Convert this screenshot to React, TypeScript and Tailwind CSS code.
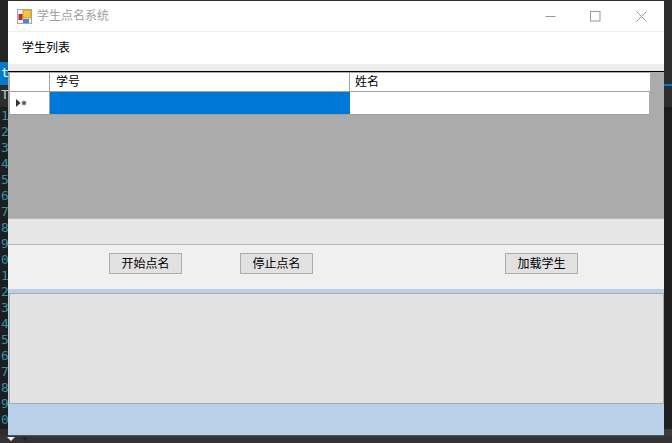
import React from "react";

const cjk = "font-['Liberation_Sans','Noto_Sans_CJK_SC',sans-serif]";
const lineNumbers = ["1", "2", "3", "4", "5", "6", "7", "8", "9", "0", "1", "2", "3", "4", "5", "6", "7", "8", "9", "0"];

function WinButton({ label, className }: { label: string; className: string }) {
  return (
    <button className={`block h-[21px] w-[73px] border border-[#adadad] bg-[#e1e1e1] text-[12px] leading-[21px] text-black ${className}`}>
      {label}
    </button>
  );
}

function LeftGutter() {
  return (
    <div className="flex h-full w-[8px] shrink-0 flex-col overflow-hidden bg-[#1e1e1e]">
      <div className="h-[62px] shrink-0 bg-[#252526]" />
      <div className="h-[23px] shrink-0 bg-[#007acc] pl-[1px] font-['DejaVu_Sans_Mono',monospace] text-[13px] leading-[22px] text-white">
        t
      </div>
      <div className="h-[22px] shrink-0 bg-[#2d2d30] pl-[1px] font-['DejaVu_Sans_Mono',monospace] text-[13px] leading-[20px] text-[#a8d8c8]">
        T
      </div>
      <div className="h-[322px] shrink-0 overflow-hidden pl-[1px] pt-[1px] font-['DejaVu_Sans_Mono',monospace] text-[13px] leading-[16px] text-[#2b91af]">
        {lineNumbers.map((n, i) => (
          <div key={i} className="h-[16px]">
            {n}
          </div>
        ))}
      </div>
      <div className="flex-1 bg-[#2d2d30]" />
    </div>
  );
}

function RightGutter() {
  return (
    <div className="flex w-[8px] shrink-0 flex-col bg-[#1e1e1e]">
      <div className="h-[84px] shrink-0 bg-[#2d2d30]" />
      <div className="h-[2px] shrink-0 bg-[#007acc]" />
      <div className="h-[21px] shrink-0 bg-[#2d2d30]" />
      <div className="h-[322px] shrink-0 bg-[#1e1e1e]" />
      <div className="flex-1 bg-[#3a3a3d]" />
    </div>
  );
}

export default function App() {
  return (
    <div className={`flex h-[443px] w-[672px] flex-col overflow-hidden bg-[#333337] ${cjk}`}>
      <div className="flex h-[436px] shrink-0">
        <LeftGutter />
        <div className="flex w-[656px] shrink-0 flex-col border-b border-[#4a5560] bg-[#2d2d30] pt-[1px]">
          {/* title bar */}
          <div className="flex h-[30px] shrink-0 items-center bg-white pl-[9px]">
            <svg width="15" height="15" viewBox="0 0 15 15" className="shrink-0">
              <rect x="0.5" y="0.5" width="14" height="14" fill="#f4f4f4" stroke="#a8a8a8" />
              <rect x="6" y="1" width="8" height="8" fill="#f3c53a" stroke="#c09a2a" strokeWidth="0.8" />
              <rect x="1.5" y="5" width="4" height="6" fill="#c8242a" />
              <rect x="6" y="10" width="6" height="4" fill="#4a86d8" />
            </svg>
            <span className="ml-[5px] text-[12px] text-[#a0a0a0]">学生点名系统</span>
            <div className="ml-auto flex h-full items-center">
              <svg width="11" height="11" viewBox="0 0 11 11" className="mr-[34px]">
                <path d="M0.5 5.5H10.5" stroke="#999" />
              </svg>
              <svg width="11" height="11" viewBox="0 0 11 11" className="mr-[35px]">
                <rect x="0.5" y="0.5" width="9.5" height="9.5" fill="none" stroke="#999" />
              </svg>
              <svg width="11" height="11" viewBox="0 0 11 11" className="mr-[17px]">
                <path d="M0.5 0.5L10.5 10.5M10.5 0.5L0.5 10.5" stroke="#999" />
              </svg>
            </div>
          </div>

          {/* menu */}
          <div className="flex h-[33px] shrink-0 items-center border-t border-[#f0f0f0] bg-white pl-[14px] text-[12px] text-black">
            学生列表
          </div>
          <div className="h-[7px] shrink-0 bg-[#eeeeee]" />
          <div className="h-[1px] shrink-0 bg-black" />

          {/* data grid */}
          <div className="h-[146px] shrink-0 bg-[#ababab] pl-[2px] pt-[1px]">
            <div className="flex h-[19px] w-[640px] border-b border-[#a0a0a0] bg-white text-[12px] leading-[19px] text-black">
              <div className="w-[40px] border-r border-[#a0a0a0]" />
              <div className="w-[300px] border-r border-[#a0a0a0] pl-[6px]">学号</div>
              <div className="flex-1 pl-[5px]">姓名</div>
            </div>
            <div className="flex h-[23px] w-[639px] border-b border-[#a0a0a0]">
              <div className="flex w-[40px] items-center border-r border-[#a0a0a0] bg-white pl-[6px]">
                <svg width="11" height="8" viewBox="0 0 11 8">
                  <path d="M0 0L4.5 4L0 8Z" fill="#333" />
                  <path d="M8 1.5V6.5M5.8 2.7L10.2 5.3M10.2 2.7L5.8 5.3" stroke="#555" strokeWidth="1.2" />
                </svg>
              </div>
              <div className="w-[300px] bg-[#0078d7]" />
              <div className="flex-1 bg-white" />
            </div>
          </div>

          {/* button panel */}
          <div className="h-[27px] shrink-0 border-y border-[#b8b8b8] bg-[#e6e6e6]" />
          <div className="flex h-[44px] shrink-0 items-start bg-[#f0f0f0] pt-[8px]">
            <WinButton label="开始点名" className="ml-[101px]" />
            <WinButton label="停止点名" className="ml-[58px]" />
            <WinButton label="加载学生" className="ml-[192px]" />
          </div>

          {/* log area */}
          <div className="flex flex-1 flex-col bg-[#b9cfea]">
            <div className="mt-[4px] ml-[1px] h-[111px] w-[655px] border border-[#ababab] bg-[#e2e2e2]" />
          </div>
        </div>
        <RightGutter />
      </div>
      <div className="flex h-[7px] items-start pl-[6px] pt-[1px]">
        <svg width="24" height="6" viewBox="0 0 24 6">
          <path d="M1 0H9L5 4Z" fill="#f0f0f0" />
          <path d="M16 0H21V5Z" fill="#232325" />
        </svg>
      </div>
    </div>
  );
}
